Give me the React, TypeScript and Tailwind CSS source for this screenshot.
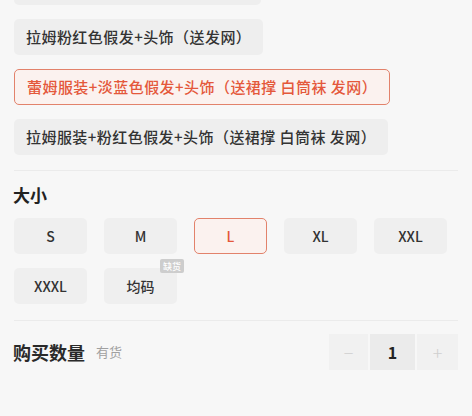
import React from "react";

const font = { fontFamily: '"Noto Sans CJK SC", "Noto Sans", sans-serif' };

function Chip({ text, selected }: { text: string; selected?: boolean }) {
  return (
    <div
      className={
        "self-start h-[36px] px-[12px] flex items-center rounded-[5px] text-[15px] font-medium tracking-[0.45px] whitespace-pre " +
        (selected
          ? "border-[1.5px] border-[#e2826b] bg-[#fbf2ef] text-[#e4583b]"
          : "bg-[#eeeeee] text-[#333333]")
      }
    >
      {text}
    </div>
  );
}

function Size({ label, selected, badge }: { label: string; selected?: boolean; badge?: string }) {
  return (
    <div
      className={
        "relative w-[73px] h-[36px] flex items-center justify-center rounded-[5px] text-[14px] font-medium " +
        (selected
          ? "border-[1.5px] border-[#e2826b] bg-[#fbf2ef] text-[#e4583b]"
          : "bg-[#efefef] text-[#333333]")
      }
    >
      {label}
      {badge && (
        <span className="absolute -top-[9px] -right-[7px] h-[14px] px-[3px] flex items-center bg-[#cdcdcd] text-white text-[9px] leading-none rounded-[2px]">
          {badge}
        </span>
      )}
    </div>
  );
}

export default function App() {
  return (
    <div className="w-[472px] h-[416px] overflow-hidden bg-[#f7f7f7]" style={font}>
      <div className="px-[14px] flex flex-col">
        <div className="-mt-[31px] flex flex-col gap-[14px]">
          <div className="self-start w-[247px] h-[36px] rounded-[5px] bg-[#eeeeee]" />
          <Chip text="拉姆粉红色假发+头饰（送发网）" />
          <Chip text="蕾姆服装+淡蓝色假发+头饰（送裙撑 白筒袜 发网）" selected />
          <Chip text="拉姆服装+粉红色假发+头饰（送裙撑 白筒袜 发网）" />
        </div>
        <div className="mt-[15px] h-px bg-[#ebebeb]" />
        <div className="mt-[13px] -ml-px text-[17px] font-bold text-[#222222] leading-[22px]">大小</div>
        <div className="mt-[12px] grid grid-cols-[repeat(5,73px)] gap-x-[17px] gap-y-[14px]">
          <Size label="S" />
          <Size label="M" />
          <Size label="L" selected />
          <Size label="XL" />
          <Size label="XXL" />
          <Size label="XXXL" />
          <Size label="均码" badge="缺货" />
        </div>
        <div className="mt-[16px] h-px bg-[#ebebeb]" />
        <div className="mt-[13px] flex items-center justify-between">
          <div className="flex items-center gap-[11px]">
            <span className="-ml-px text-[18px] font-bold text-[#2a2a2a]">购买数量</span>
            <span className="text-[13px] text-[#a0a0a0]">有货</span>
          </div>
          <div className="flex gap-[2px] h-[36px]">
            <div className="w-[39px] bg-[#f1f1f1] flex items-center justify-center text-[#cfcfcf] text-[18px] font-light">−</div>
            <div className="w-[45px] bg-[#ebebeb] flex items-center justify-center text-[#222222] text-[16px] font-bold">1</div>
            <div className="w-[41px] bg-[#f1f1f1] flex items-center justify-center text-[#cfcfcf] text-[18px] font-light">+</div>
          </div>
        </div>
      </div>
    </div>
  );
}
